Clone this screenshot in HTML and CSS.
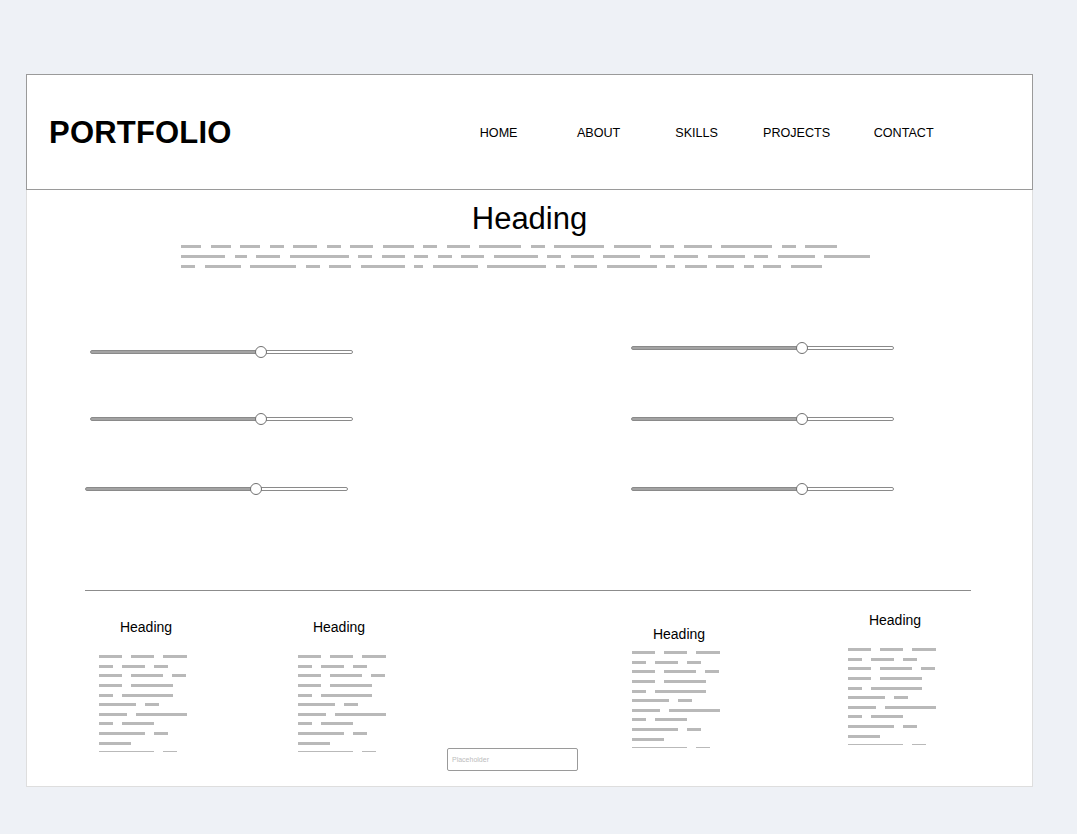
FILE: index.html
```html
<!DOCTYPE html>
<html lang="en">
<head>
<meta charset="utf-8">
<title>Portfolio</title>
<link rel="stylesheet" href="styles.css">
</head>
<body>
<div class="page">
  <div class="card">
    <header class="header">
      <div class="logo">PORTFOLIO</div>
      <nav class="nav">
        <a class="nav-item">HOME</a>
        <a class="nav-item">ABOUT</a>
        <a class="nav-item">SKILLS</a>
        <a class="nav-item">PROJECTS</a>
        <a class="nav-item">CONTACT</a>
      </nav>
    </header>
    <main class="body">
      <h1 class="title">Heading</h1>
      <div class="para">
        <div class="ln">
          <span class="d w20"></span><span class="d w20"></span><span class="d w20"></span><span class="d w14"></span><span class="d w24"></span><span class="d w14"></span><span class="d w23"></span><span class="d w31"></span><span class="d w14"></span><span class="d w23"></span><span class="d w42"></span><span class="d w14"></span><span class="d w50"></span><span class="d w37"></span><span class="d w14"></span><span class="d w28"></span><span class="d w51"></span><span class="d w14"></span><span class="d w32"></span>
        </div>
        <div class="ln">
          <span class="d w44"></span><span class="d w12"></span><span class="d w24"></span><span class="d w59"></span><span class="d w14"></span><span class="d w23"></span><span class="d w14"></span><span class="d w14"></span><span class="d w23"></span><span class="d w44"></span><span class="d w14"></span><span class="d w23"></span><span class="d w37"></span><span class="d w15"></span><span class="d w24"></span><span class="d w37"></span><span class="d w14"></span><span class="d w37"></span><span class="d w46"></span>
        </div>
        <div class="ln">
          <span class="d w14"></span><span class="d w36"></span><span class="d w46"></span><span class="d w14"></span><span class="d w22"></span><span class="d w44"></span><span class="d w9"></span><span class="d w45"></span><span class="d w59"></span><span class="d w9"></span><span class="d w23"></span><span class="d w50"></span><span class="d w9"></span><span class="d w22"></span><span class="d w18"></span><span class="d w10"></span><span class="d w18"></span><span class="d w31"></span>
        </div>
      </div>

      <div class="sliders">
        <div class="slider drop"><div class="track"></div><span class="thumb"></span></div>
        <div class="slider"><div class="track"></div><span class="thumb"></span></div>
        <div class="slider nudge"><div class="track"></div><span class="thumb"></span></div>
        <div class="slider"><div class="track"></div><span class="thumb"></span></div>
        <div class="slider"><div class="track"></div><span class="thumb"></span></div>
        <div class="slider"><div class="track"></div><span class="thumb"></span></div>
      </div>

      <hr class="rule">

      <section class="cols">
        <div class="col c1">
          <h2 class="col-title">Heading</h2>
          <div class="col-text">
            <div class="cl"><span class="d w23"></span><span class="d w23"></span><span class="d w24"></span></div>
            <div class="cl"><span class="d w14"></span><span class="d w23"></span><span class="d w14"></span></div>
            <div class="cl"><span class="d w23"></span><span class="d w32"></span><span class="d w14"></span></div>
            <div class="cl"><span class="d w23"></span><span class="d w42"></span></div>
            <div class="cl"><span class="d w14"></span><span class="d w51"></span></div>
            <div class="cl"><span class="d w37"></span><span class="d w14"></span></div>
            <div class="cl"><span class="d w28"></span><span class="d w51"></span></div>
            <div class="cl"><span class="d w14"></span><span class="d w32"></span></div>
            <div class="cl"><span class="d w46"></span><span class="d w14"></span></div>
            <div class="cl"><span class="d w32"></span></div>
            <div class="cl"><span class="d w55"></span><span class="d w14"></span></div>
          </div>
        </div>
        <div class="col c2">
          <h2 class="col-title shift">Heading</h2>
          <div class="col-text">
            <div class="cl"><span class="d w23"></span><span class="d w23"></span><span class="d w24"></span></div>
            <div class="cl"><span class="d w14"></span><span class="d w23"></span><span class="d w14"></span></div>
            <div class="cl"><span class="d w23"></span><span class="d w32"></span><span class="d w14"></span></div>
            <div class="cl"><span class="d w23"></span><span class="d w42"></span></div>
            <div class="cl"><span class="d w14"></span><span class="d w51"></span></div>
            <div class="cl"><span class="d w37"></span><span class="d w14"></span></div>
            <div class="cl"><span class="d w28"></span><span class="d w51"></span></div>
            <div class="cl"><span class="d w14"></span><span class="d w32"></span></div>
            <div class="cl"><span class="d w46"></span><span class="d w14"></span></div>
            <div class="cl"><span class="d w32"></span></div>
            <div class="cl"><span class="d w55"></span><span class="d w14"></span></div>
          </div>
        </div>
        <div class="col c-input">
          <div class="input">Placeholder</div>
        </div>
        <div class="col c3">
          <h2 class="col-title">Heading</h2>
          <div class="col-text tight">
            <div class="cl"><span class="d w23"></span><span class="d w23"></span><span class="d w24"></span></div>
            <div class="cl"><span class="d w14"></span><span class="d w23"></span><span class="d w14"></span></div>
            <div class="cl"><span class="d w23"></span><span class="d w32"></span><span class="d w14"></span></div>
            <div class="cl"><span class="d w23"></span><span class="d w42"></span></div>
            <div class="cl"><span class="d w14"></span><span class="d w51"></span></div>
            <div class="cl"><span class="d w37"></span><span class="d w14"></span></div>
            <div class="cl"><span class="d w28"></span><span class="d w51"></span></div>
            <div class="cl"><span class="d w14"></span><span class="d w32"></span></div>
            <div class="cl"><span class="d w46"></span><span class="d w14"></span></div>
            <div class="cl"><span class="d w32"></span></div>
            <div class="cl"><span class="d w55"></span><span class="d w14"></span></div>
          </div>
        </div>
        <div class="col c4">
          <h2 class="col-title">Heading</h2>
          <div class="col-text">
            <div class="cl"><span class="d w23"></span><span class="d w23"></span><span class="d w24"></span></div>
            <div class="cl"><span class="d w14"></span><span class="d w23"></span><span class="d w14"></span></div>
            <div class="cl"><span class="d w23"></span><span class="d w32"></span><span class="d w14"></span></div>
            <div class="cl"><span class="d w23"></span><span class="d w42"></span></div>
            <div class="cl"><span class="d w14"></span><span class="d w51"></span></div>
            <div class="cl"><span class="d w37"></span><span class="d w14"></span></div>
            <div class="cl"><span class="d w28"></span><span class="d w51"></span></div>
            <div class="cl"><span class="d w14"></span><span class="d w32"></span></div>
            <div class="cl"><span class="d w46"></span><span class="d w14"></span></div>
            <div class="cl"><span class="d w32"></span></div>
            <div class="cl"><span class="d w55"></span><span class="d w14"></span></div>
          </div>
        </div>
      </section>
    </main>
  </div>
</div>
</body>
</html>
```

FILE: styles.css
```css
* { box-sizing: border-box; }
html, body { margin: 0; padding: 0; }
body {
  background: #eef1f6;
  font-family: "Liberation Sans", Arial, sans-serif;
  color: #000;
  width: 1077px;
  height: 834px;
  overflow: hidden;
}
.page { padding: 74px 0 0 26px; }
.card { width: 1007px; }

.header {
  height: 116px;
  border: 1px solid #9a9a9a;
  background: #fff;
  display: flex;
  align-items: center;
  padding-left: 22px;
  padding-top: 2px;
}
.logo {
  font-weight: bold;
  font-size: 31px;
  line-height: 36px;
  letter-spacing: 0.2px;
}
.nav {
  display: grid;
  grid-template-columns: 100px 100px 96px 104px 110px;
  margin-left: 217px;
  margin-top: -1px;
}
.nav-item {
  font-size: 12.6px;
  line-height: 16px;
  text-align: center;
  color: #000;
}

.body {
  background: #fff;
  border: 1px solid #dedede;
  border-top: none;
  padding: 11px 0 15px;
}
.title {
  margin: 0;
  font-weight: normal;
  font-size: 31px;
  line-height: 36px;
  text-align: center;
}
.para {
  width: 697px;
  margin: 4px auto 0;
}
.ln {
  display: flex;
  align-items: center;
  gap: 9.5px;
  height: 10px;
}
.d {
  display: block;
  height: 3px;
  background: #b9b9b9;
  flex: none;
}
.w9 { width: 9px; } .w10 { width: 10px; } .w12 { width: 12px; }
.w14 { width: 14px; } .w15 { width: 15px; } .w18 { width: 18px; }
.w20 { width: 20px; } .w22 { width: 22px; } .w23 { width: 23px; }
.w24 { width: 24px; } .w28 { width: 28px; } .w31 { width: 31px; }
.w32 { width: 32px; } .w36 { width: 36px; } .w37 { width: 37px; }
.w42 { width: 42px; } .w44 { width: 44px; } .w45 { width: 45px; }
.w46 { width: 46px; } .w50 { width: 50px; } .w51 { width: 51px; }
.w55 { width: 55px; } .w56 { width: 56px; } .w59 { width: 59px; }

.sliders {
  display: grid;
  grid-template-columns: 541px 263px;
  grid-auto-flow: column;
  grid-template-rows: 12px 12px 12px;
  row-gap: 58.5px;
  margin-top: 71px;
  padding-left: 63px;
}
.slider {
  position: relative;
  width: 263px;
  height: 12px;
}
.slider.drop { margin-top: 4px; }
.slider.nudge { margin-left: -5px; }
.track {
  margin-top: 4px;
  height: 4px;
  border: 1px solid #8a8a8a;
  border-radius: 3px;
  background: linear-gradient(to right, #a3a3a3 0, #a3a3a3 65%, #fff 65%, #fff 100%);
}
.thumb {
  position: absolute;
  left: 165px;
  top: 0;
  width: 12px;
  height: 12px;
  border-radius: 50%;
  border: 1px solid #707070;
  background: #fff;
}

.rule {
  margin: 95px 61px 0 58px;
  border: none;
  border-top: 1px solid #8c8c8c;
  height: 0;
}

.cols {
  display: grid;
  grid-template-columns: 199px 149px 185px 216px 95px;
  padding-left: 72px;
  align-items: start;
}
.col { width: 94px; }
.c1, .c2 { padding-top: 28px; }
.c3 { padding-top: 35px; }
.c4 { padding-top: 21px; }
.col-title {
  margin: 0;
  font-weight: normal;
  font-size: 14px;
  line-height: 16px;
  text-align: center;
  white-space: nowrap;
}
.col-title.shift { margin-left: -12px; }
.col-text {
  margin-top: 17px;
  height: 100px;
  overflow: hidden;
}
.col-text.tight { margin-top: 6px; }
.cl {
  display: flex;
  align-items: center;
  gap: 9px;
  height: 9.6px;
}

.c-input {
  width: 131px;
  padding-top: 157px;
}
.input {
  width: 131px;
  height: 23px;
  border: 1px solid #9a9a9a;
  border-radius: 2px;
  font-size: 7px;
  line-height: 21px;
  color: #bdbdbd;
  padding-left: 4px;
}
```
